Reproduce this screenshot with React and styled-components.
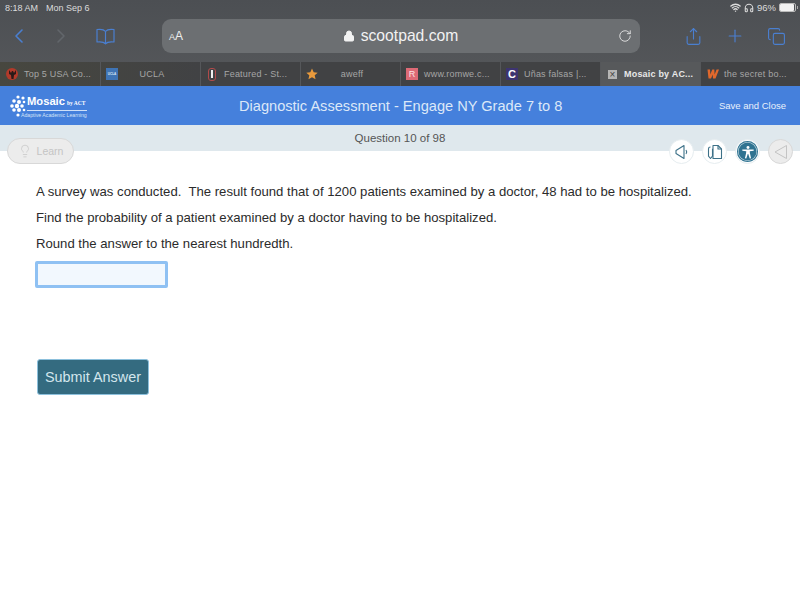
import styled, { createGlobalStyle } from 'styled-components';
import { ChevronLeft, ChevronRight, Lock, RotateCw, Share, Plus, Copy, Wifi, Headphones, Lightbulb } from 'lucide-react';

const tabs = [
  { title: 'Top 5 USA Co...', icon: 'red' },
  { title: 'UCLA', icon: 'ucla', center: true },
  { title: 'Featured - St...', icon: 'stanford' },
  { title: 'aweff', icon: 'star', center: true },
  { title: 'www.romwe.c...', icon: 'romwe' },
  { title: 'Uñas falsas |...', icon: 'c' },
  { title: 'Mosaic by AC...', icon: 'x', active: true },
  { title: 'the secret bo...', icon: 'w' },
];

const logoDots = [
  [8, 2, 1.6], [13, 3, 1.6], [4, 6, 1.8], [9, 7, 2], [14, 7, 1.3], [2, 11, 1.8], [7, 11, 2.2],
  [12, 11, 1.8], [4, 15, 1.8], [9, 15, 2], [14, 15, 1.3], [8, 20, 1.6],
];

function TabIcon({ kind }) {
  if (kind === 'red') return <RedDot><svg width="9" height="10" viewBox="0 0 9 10"><path d="M1 1 L3 4 L4 2 L5 2 L6 4 L8 1 L8 5 L6 6 L5.5 10 L3.5 10 L3 6 L1 5 Z" fill="#2a1a18" /></svg></RedDot>;
  if (kind === 'ucla') return <UclaIcon>UCLA</UclaIcon>;
  if (kind === 'stanford') return <StanfordIcon><i /></StanfordIcon>;
  if (kind === 'star') return <svg width="12" height="12" viewBox="0 0 24 24"><path d="M12 1l3.4 7.4 8 .9-6 5.4 1.7 8L12 18.7l-7.1 4 1.7-8-6-5.4 8-.9z" fill="#e99a3c" /></svg>;
  if (kind === 'romwe') return <RomweIcon>R</RomweIcon>;
  if (kind === 'c') return <CIcon>C</CIcon>;
  if (kind === 'x') return <XIcon>×</XIcon>;
  return <svg width="13" height="10" viewBox="0 0 13 10"><path d="M1.500 .5h2.500l.3 5 2-5h2l.3 5 2-5H13L9.500 9.500H7l-.3-4-1.700 4H2.500z" fill="#e0682c" /></svg>;
}

export default function App() {
  return (
    <Page>
      <GlobalStyle />
      <Chrome>
        <StatusBar>
          <StatusGroup>
            <span>8:18 AM</span>
            <span>Mon Sep 6</span>
          </StatusGroup>
          <StatusRight>
            <Wifi size={11} strokeWidth={3} />
            <Headphones size={10} strokeWidth={2.5} />
            <span>96%</span>
            <Battery><BatteryFill /></Battery>
          </StatusRight>
        </StatusBar>
        <Toolbar>
          <NavGroup>
            <ChevronLeft size={24} strokeWidth={1.6} color="#4a7fd0" />
            <ChevronRight size={24} strokeWidth={1.6} color="#62666b" />
            <svg width="19" height="17" viewBox="0 0 19 17" fill="none" stroke="#4a7fd0" strokeWidth="1.2" strokeLinejoin="round">
              <path d="M9.500 3.500C8 1.500 4.500 1 1 1.500V14c3.500-.4 7 0 8.500 1.800C11 14 14.500 13.600 18 14V1.500C14.500 1 11 1.500 9.500 3.500z" />
              <path d="M9.500 3.500v12.300" />
            </svg>
          </NavGroup>
          <AddressBar>
            <TextSize><small>A</small>A</TextSize>
            <Url><Lock size={12} fill="#f2f2f2" strokeWidth={2} />scootpad.com</Url>
            <RotateCw size={14} strokeWidth={1.5} color="#e6e6e6" />
          </AddressBar>
          <ActionGroup>
            <Share size={19} strokeWidth={1.4} color="#4a7fd0" />
            <Plus size={20} strokeWidth={1.4} color="#4a7fd0" />
            <Copy size={19} strokeWidth={1.4} color="#4a7fd0" />
          </ActionGroup>
        </Toolbar>
        <TabStrip>
          {tabs.map((tab) => (
            <Tab key={tab.title} $active={tab.active}>
              <TabIconSlot><TabIcon kind={tab.icon} /></TabIconSlot>
              <TabTitle $center={tab.center} $active={tab.active}>{tab.title}</TabTitle>
            </Tab>
          ))}
        </TabStrip>
      </Chrome>

      <AppHeader>
        <Logo>
          <svg width="16" height="22" viewBox="0 0 16 22">
            {logoDots.map(([cx, cy, r]) => (
              <circle key={`${cx}-${cy}`} cx={cx} cy={cy} r={r} fill="#fff" />
            ))}
          </svg>
          <LogoText>
            <LogoName>Mosaic<LogoBy>by ACT</LogoBy></LogoName>
            <LogoTag>Adaptive Academic Learning</LogoTag>
          </LogoText>
        </Logo>
        <HeaderTitle>Diagnostic Assessment - Engage NY Grade 7 to 8</HeaderTitle>
        <SaveClose>Save and Close</SaveClose>
      </AppHeader>

      <ProgressBar>
        Question 10 of 98
        <LearnButton><Lightbulb size={14} strokeWidth={1.2} />Learn</LearnButton>
        <ToolRow>
          <ToolButton>
            <svg width="16" height="16" viewBox="0 0 16 16" fill="none" stroke="#3d7188" strokeWidth="1.1" strokeLinejoin="round">
              <path d="M10 1.500 L2 6.500 L2 9.500 L10 14.500 Z" />
              <path d="M12 6c.9 1.200.9 2.800 0 4" />
            </svg>
          </ToolButton>
          <ToolButton>
            <svg width="16" height="16" viewBox="0 0 16 16" fill="none" stroke="#3d7188" strokeWidth="1.1" strokeLinejoin="round">
              <path d="M6 1.500h5l3.500 3.500v9.500H6z" />
              <path d="M11 1.500V5h3.500" />
              <path d="M3.500 3c-1.100 0-2 .7-2 1.700v7.500l2 2.300 2-2.300V4.700" />
            </svg>
          </ToolButton>
          <ToolButton>
            <Accessibility>
              <svg width="14" height="14" viewBox="0 0 16 16" fill="#fff">
                <circle cx="8" cy="2.800" r="1.700" />
                <path d="M1.500 5 L14.500 5 L14.500 6.500 L10 7.200 L10.200 9.500 L11.500 15 L10 15.300 L8.300 10.200 L7.700 10.200 L6 15.300 L4.500 15 L5.800 9.500 L6 7.200 L1.500 6.500 Z" />
              </svg>
            </Accessibility>
          </ToolButton>
          <ToolButton $disabled>
            <svg width="14" height="16" viewBox="0 0 14 16" fill="none" stroke="#c4c4c4" strokeWidth="1" strokeLinejoin="round">
              <path d="M12.500 1.500 L1 8 L12.500 14.500 Z" />
            </svg>
          </ToolButton>
        </ToolRow>
      </ProgressBar>

      <Question>
        <QuestionLine>A survey was conducted.&nbsp; The result found that of 1200 patients examined by a doctor, 48 had to be hospitalized.</QuestionLine>
        <QuestionLine>Find the probability of a patient examined by a doctor having to be hospitalized.</QuestionLine>
        <QuestionLine>Round the answer to the nearest hundredth.</QuestionLine>
        <AnswerInput />
        <SubmitButton>Submit Answer</SubmitButton>
      </Question>
    </Page>
  );
}

const GlobalStyle = createGlobalStyle`
  html, body { margin: 0; padding: 0; background: #fff; }
  body { font-family: "Liberation Sans", Arial, sans-serif; }
`;

const Page = styled.div`
  width: 800px;
  height: 600px;
  overflow: hidden;
  background: #fff;
`;

const Chrome = styled.div`
  background: linear-gradient(180deg, #4c4f53 0%, #56585b 100%);
`;

const StatusBar = styled.div`
  height: 15px;
  padding: 0 4px 0 5px;
  display: flex;
  align-items: center;
  justify-content: space-between;
  font-size: 9px;
  color: #dcdcdc;
`;

const StatusGroup = styled.div`
  display: flex;
  gap: 8px;
`;

const StatusRight = styled.div`
  display: flex;
  align-items: center;
  gap: 3px;
  font-size: 9.5px;
`;

const Battery = styled.div`
  position: relative;
  width: 15px;
  height: 7px;
  border: 1px solid #bbb;
  border-radius: 2px;
  &::after {
    content: '';
    position: absolute;
    right: -3px;
    top: 2px;
    width: 1px;
    height: 3px;
    background: #aaa;
  }
`;

const BatteryFill = styled.div`
  width: 95%;
  height: 100%;
  background: #f2f2f2;
  border-radius: 1px;
`;

const Toolbar = styled.div`
  height: 47px;
  display: flex;
  align-items: center;
  padding-bottom: 5px;
  box-sizing: border-box;
`;

const NavGroup = styled.div`
  width: 162px;
  display: flex;
  align-items: center;
  gap: 18px;
  padding-left: 7px;
  box-sizing: border-box;
  svg:last-child { margin-left: 5px; }
`;

const AddressBar = styled.div`
  width: 478px;
  height: 34px;
  background: #6c6f72;
  border-radius: 9px;
  display: flex;
  align-items: center;
  padding: 0 8px 0 7px;
  box-sizing: border-box;
`;

const TextSize = styled.div`
  color: #eee;
  font-size: 12px;
  width: 40px;
  small { font-size: 9px; }
`;

const Url = styled.div`
  flex: 1;
  display: flex;
  align-items: center;
  justify-content: center;
  gap: 6px;
  color: #f2f2f2;
  font-size: 15.7px;
  padding-right: 26px;
`;

const ActionGroup = styled.div`
  flex: 1;
  display: flex;
  align-items: center;
  justify-content: space-between;
  padding: 0 14px 0 44px;
`;

const TabStrip = styled.div`
  height: 24px;
  display: grid;
  grid-template-columns: repeat(8, 100px);
  background: linear-gradient(90deg, #47473f 0%, #414244 25%);
`;

const Tab = styled.div`
  display: flex;
  align-items: center;
  padding-left: 5px;
  border-left: 1px solid #55575a;
  box-sizing: border-box;
  background: ${(p) => (p.$active ? '#57595b' : 'transparent')};
  &:first-child { border-left-color: transparent; }
`;

const TabIconSlot = styled.div`
  width: 18px;
  display: flex;
  align-items: center;
  flex-shrink: 0;
`;

const TabTitle = styled.div`
  flex: 1;
  padding-right: ${(p) => (p.$center ? '20px' : '0')};
  text-align: ${(p) => (p.$center ? 'center' : 'left')};
  font-size: 9px;
  letter-spacing: 0.2px;
  white-space: nowrap;
  color: ${(p) => (p.$active ? '#e8e8e8' : '#a6a6a6')};
  font-weight: ${(p) => (p.$active ? 700 : 400)};
`;

const RedDot = styled.div`
  width: 12px;
  height: 12px;
  border-radius: 50%;
  background: #b23a2a;
  display: flex;
  align-items: center;
  justify-content: center;
`;

const UclaIcon = styled.div`
  width: 12px;
  height: 12px;
  background: #3f74b5;
  color: #dfe8f4;
  font-size: 3px;
  font-weight: 700;
  display: flex;
  align-items: center;
  justify-content: center;
`;

const StanfordIcon = styled.div`
  width: 8px;
  height: 13px;
  margin-left: 2px;
  border: 1px solid #b14a4a;
  border-radius: 3px;
  box-sizing: border-box;
  display: flex;
  justify-content: center;
  i { width: 2px; height: 8px; margin-top: 1px; background: #eee; }
`;

const RomweIcon = styled.div`
  width: 12px;
  height: 12px;
  background: #dd6a76;
  color: #fbe4e6;
  font-size: 9px;
  display: flex;
  align-items: center;
  justify-content: center;
`;

const CIcon = styled.div`
  width: 12px;
  height: 12px;
  background: #3d3470;
  color: #fff;
  font-size: 11px;
  font-weight: 700;
  display: flex;
  align-items: center;
  justify-content: center;
`;

const XIcon = styled.div`
  width: 9px;
  height: 9px;
  margin-left: 2px;
  background: #b5b5b5;
  color: #444;
  font-size: 10px;
  line-height: 9px;
  text-align: center;
`;

const AppHeader = styled.div`
  height: 39px;
  background: #4580dc;
  display: flex;
  align-items: center;
  color: #fff;
  padding: 0 14px 0 10px;
  box-sizing: border-box;
`;

const Logo = styled.div`
  width: 229px;
  display: flex;
  align-items: center;
  gap: 1px;
`;

const LogoText = styled.div`
  display: flex;
  flex-direction: column;
  padding-top: 3px;
`;

const LogoName = styled.div`
  font-size: 11.2px;
  font-weight: 700;
  line-height: 11px;
  padding-bottom: 1px;
  border-bottom: 1px solid #cfe0f8;
  white-space: nowrap;
`;

const LogoBy = styled.span`
  font-family: "Liberation Serif", serif;
  font-size: 5.5px;
  margin-left: 2px;
  font-weight: 700;
`;

const LogoTag = styled.div`
  font-size: 5.2px;
  line-height: 8px;
  margin-left: -6px;
  color: #d5e3f7;
  white-space: nowrap;
`;

const HeaderTitle = styled.div`
  flex: 1;
  font-size: 14.6px;
  padding-top: 1px;
  color: #dce8f8;
`;

const SaveClose = styled.div`
  font-size: 9.5px;
  color: #e8f0fb;
`;

const ProgressBar = styled.div`
  position: relative;
  height: 26px;
  background: #dfe8ed;
  text-align: center;
  font-size: 11.5px;
  line-height: 27px;
  color: #555;
`;

const LearnButton = styled.div`
  position: absolute;
  left: 7px;
  top: 13px;
  width: 67px;
  height: 26px;
  box-sizing: border-box;
  border: 1px solid #d8d8d8;
  border-radius: 13px;
  background: #ececec;
  color: #c4c4c4;
  font-size: 10.5px;
  display: flex;
  align-items: center;
  justify-content: center;
  gap: 5px;
`;

const ToolRow = styled.div`
  position: absolute;
  left: 669px;
  top: 14px;
  display: flex;
  gap: 8px;
`;

const ToolButton = styled.div`
  width: 25px;
  height: 25px;
  box-sizing: border-box;
  border-radius: 50%;
  background: ${(p) => (p.$disabled ? '#ececec' : '#fff')};
  border: 1px solid ${(p) => (p.$disabled ? '#d8d8d8' : '#e6edf0')};
  display: flex;
  align-items: center;
  justify-content: center;
`;

const Accessibility = styled.div`
  width: 21px;
  height: 21px;
  flex-shrink: 0;
  border-radius: 50%;
  background: #2f7391;
  box-shadow: inset 0 0 0 1px #2f7391, inset 0 0 0 1.5px #d8e6ec;
  display: flex;
  align-items: center;
  justify-content: center;
`;

const Question = styled.div`
  padding: 28px 0 0 36px;
  display: flex;
  flex-direction: column;
  align-items: flex-start;
`;

const QuestionLine = styled.div`
  height: 26px;
  font-size: 13.15px;
  line-height: 26px;
  color: #2b2b2b;
  white-space: nowrap;
`;

const AnswerInput = styled.input`
  width: 133px;
  height: 27px;
  margin: 4px 0 0 -1px;
  box-sizing: border-box;
  border: 3px solid #8fc1f3;
  border-radius: 2px;
  background: #f2f8fe;
  outline: none;
`;

const SubmitButton = styled.button`
  margin: 71px 0 0 1px;
  width: 112px;
  height: 36px;
  padding: 0;
  background: #346b80;
  border: 1px solid #8cc0dc;
  border-radius: 3px;
  color: #d3e6ed;
  font-family: "Liberation Sans", Arial, sans-serif;
  font-size: 14.4px;
`;
